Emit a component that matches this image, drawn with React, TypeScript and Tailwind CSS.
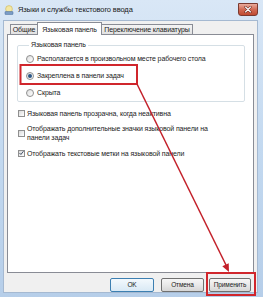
import React from 'react';

function Radio({ checked }: { checked?: boolean }) {
  return (
    <span className="w-[8px] h-[8px] rounded-full border border-[#8f8f8f] bg-linear-to-br from-[#dedede] to-white flex items-center justify-center shrink-0">
      {checked && <span className="w-[4px] h-[4px] rounded-full bg-[#2a5685]" />}
    </span>
  );
}

function Check({ checked }: { checked?: boolean }) {
  return (
    <span className="w-[7px] h-[7px] border border-[#8f8f8f] bg-linear-to-br from-[#dadada] to-white flex items-center justify-center shrink-0">
      {checked && (
        <svg width="6" height="6" viewBox="0 0 6 6">
          <path d="M0.6 3 L2.3 4.8 L5.4 0.8" stroke="#39465e" strokeWidth="1.1" fill="none" />
        </svg>
      )}
    </span>
  );
}

export default function App() {
  const radios = [
    { label: 'Располагается в произвольном месте рабочего стола' },
    { label: 'Закреплена в панели задач', checked: true },
    { label: 'Скрыта' },
  ];

  return (
    <div className="relative w-[263px] h-[300px] bg-white overflow-hidden font-['Liberation_Sans',Arial,sans-serif] text-[#1b1b1b] tracking-[-0.12px]">
      <div className="h-[297px] flex flex-col bg-linear-to-b from-[#d9e7f6] via-[#c3d9f0] to-[#b6cee9] pl-[3px] pr-[5px] pb-[4px]">
        {/* title bar */}
        <div className="h-[20px] flex items-center shrink-0">
          <svg width="10" height="10" viewBox="0 0 10 10" className="ml-[1px]">
            <circle cx="5" cy="4" r="3.4" fill="#f3e7a2" stroke="#c9b45a" strokeWidth="0.6" />
            <rect x="1" y="6.5" width="8" height="3" rx="0.6" fill="#7a9cc6" stroke="#4b6e9a" strokeWidth="0.5" />
          </svg>
          <span className="ml-[4px] text-[7.5px] leading-[10px] text-[#1a1a1a]">Языки и службы текстового ввода</span>
          <div className="ml-auto self-start mt-[3px] w-[20px] h-[13px] rounded-b-[3px] border border-[#7b3a30] bg-linear-to-b from-[#e9ab9c] via-[#d26b55] to-[#c04a30] flex items-center justify-center">
            <svg width="8" height="7" viewBox="0 0 8 7">
              <path d="M1.5 1 L6.5 6 M6.5 1 L1.5 6" stroke="#5a2018" strokeWidth="2.2" strokeLinecap="round" />
              <path d="M1.5 1 L6.5 6 M6.5 1 L1.5 6" stroke="#ffffff" strokeWidth="1.1" strokeLinecap="round" />
            </svg>
          </div>
        </div>

        {/* client area */}
        <div className="flex-1 flex flex-col bg-[#f0f0f0] border border-[#a5b9d1] px-[3px] pt-[1px]">
          <div className="h-[12px] flex items-end pl-[3px] shrink-0 text-[7px] whitespace-nowrap">
            <div className="w-[27px] h-[10px] border border-r-0 border-b-0 border-[#898c95] bg-linear-to-b from-[#f4f4f4] to-[#e2e2e2] flex items-center justify-center leading-none">
              Общие
            </div>
            <div className="relative z-10 -mb-[1px] w-[65px] h-[13px] border border-b-0 border-[#898c95] bg-white flex items-center justify-center leading-none">
              Языковая панель
            </div>
            <div className="w-[91px] h-[10px] border border-l-0 border-b-0 border-[#898c95] bg-linear-to-b from-[#f4f4f4] to-[#e2e2e2] flex items-center justify-center leading-none">
              Переключение клавиатуры
            </div>
          </div>

          <div className="h-[239px] shrink-0 bg-white border border-[#898c95] flex flex-col pl-[9px] text-[7px] leading-[9px]">
            <fieldset className="mt-[5px] mr-[8px] h-[62px] border border-[#d5dfe5] rounded-[2px] pl-[8px]">
              <legend className="ml-[3px] px-[2px] leading-[10px]">Языковая панель</legend>
              {radios.map((r, i) => (
                <div key={i} className="h-[17px] flex items-center gap-[3px]">
                  <Radio checked={r.checked} />
                  <span>{r.label}</span>
                </div>
              ))}
            </fieldset>

            <div className="mt-[6px] ml-[1px] h-[10px] flex items-center gap-[2px]">
              <Check />
              <span>Языковая панель прозрачна, когда неактивна</span>
            </div>
            <div className="mt-[6px] ml-[1px] flex items-center gap-[2px]">
              <Check />
              <span>
                Отображать дополнительные значки языковой панели на
                <br />
                панели задач
              </span>
            </div>
            <div className="mt-[6px] ml-[1px] h-[10px] flex items-center gap-[2px]">
              <Check checked />
              <span>Отображать текстовые метки на языковой панели</span>
            </div>
          </div>

          <div className="mt-[5px] h-[14px] flex justify-end pr-[3px] text-[6.5px]">
            <div className="w-[44px] rounded-[2px] border border-[#3c7fb1] bg-linear-to-b from-[#f3f9fd] to-[#d9e9f5] flex items-center justify-center">
              OK
            </div>
            <div className="ml-[7px] w-[43px] rounded-[2px] border border-[#707070] bg-linear-to-b from-[#f6f6f6] via-[#e9e9e9] to-[#d6d6d6] flex items-center justify-center">
              Отмена
            </div>
            <div className="ml-[5px] w-[42px] rounded-[2px] border border-[#707070] bg-linear-to-b from-[#f6f6f6] via-[#e9e9e9] to-[#d6d6d6] flex items-center justify-center">
              Применить
            </div>
          </div>
        </div>
      </div>

      {/* annotation overlay */}
      <svg className="absolute inset-0 pointer-events-none" width="263" height="300" viewBox="0 0 263 300">
        <rect x="20.5" y="65" width="116.5" height="19" fill="none" stroke="#d0262c" strokeWidth="2" />
        <rect x="207" y="273" width="48" height="22" fill="none" stroke="#d0262c" strokeWidth="2" />
        <line x1="137" y1="84" x2="226" y2="265" stroke="#c3202a" strokeWidth="1.5" />
        <polygon points="229,272 222.3,266.3 228.7,263.3" fill="#c3202a" />
      </svg>
    </div>
  );
}
